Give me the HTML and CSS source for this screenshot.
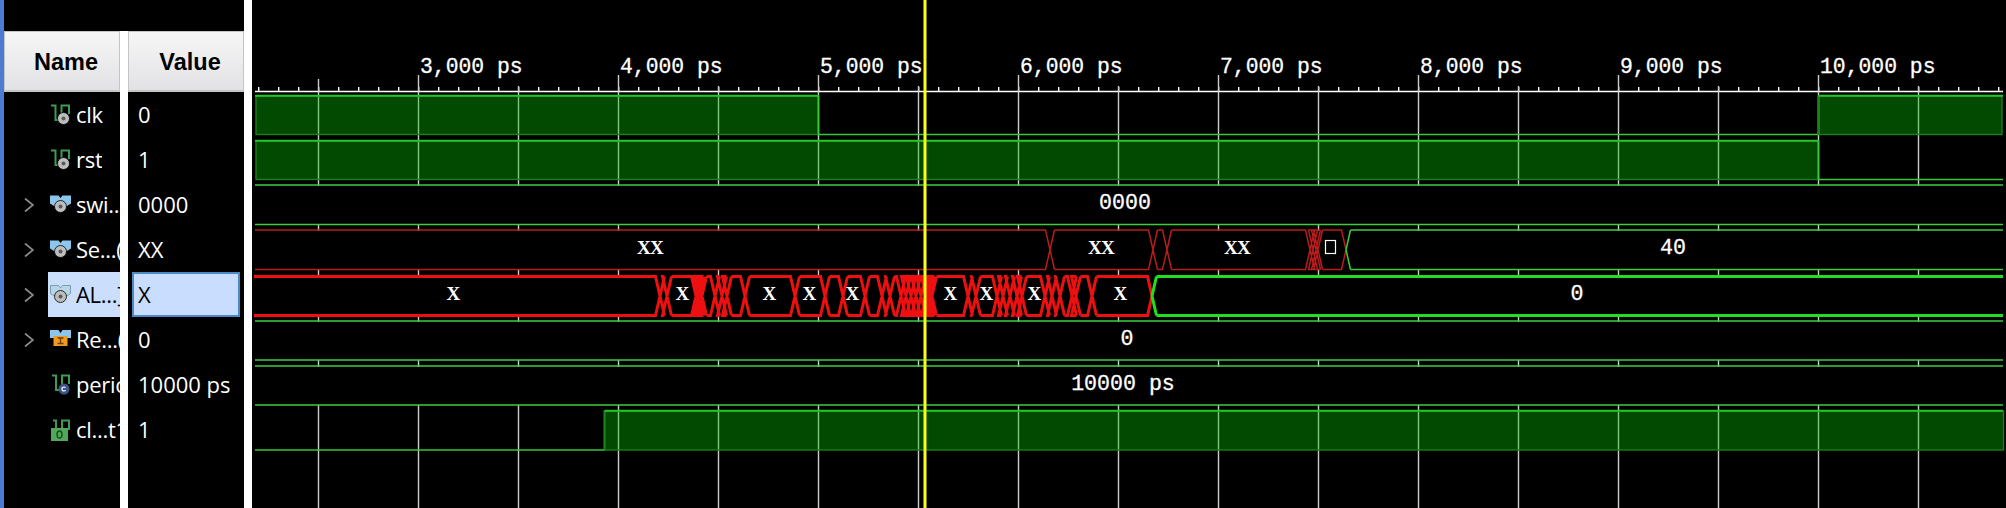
FILE: index.html
```html
<!DOCTYPE html>
<html lang="en">
<head>
    <meta charset="UTF-8">
    <title>Waveform viewer</title>
    <link rel="stylesheet" href="styles.css">
</head>
<body>
    <svg class="icon-defs" width="0" height="0">
        <symbol id="wire-in" viewBox="0 0 24 24">
            <path class="icon-wave" d="M1 2.5H5.5V17H11.5V2.5H19V11"/>
            <circle class="icon-port" cx="13.5" cy="15.5" r="6"/>
            <circle class="icon-hole" cx="13.5" cy="15.5" r="2"/>
        </symbol>
        <symbol id="wire-const" viewBox="0 0 24 24">
            <path class="icon-wave" d="M2 2.5H6V17H12V2.5H19V11"/>
            <circle class="icon-const" cx="14" cy="16" r="5.5"/>
            <path class="icon-const-c" d="M15.5 14.8A2 2 0 1 0 15.5 17.2"/>
        </symbol>
        <symbol id="wire-out" viewBox="0 0 24 24">
            <path class="icon-wave" d="M3 2.5H6V12M12 12V2.5H19V12"/>
            <rect class="icon-out" x="1" y="10" width="17" height="13"/>
            <ellipse class="icon-out-o" cx="9.5" cy="16.5" rx="2.5" ry="3.5"/>
        </symbol>
        <symbol id="bus-in" viewBox="0 0 24 24">
            <path class="icon-bus" d="M0 2.5H8.5L10.5 5L12.5 2.5H21V10.5L17 13H4L0 10.5Z"/>
            <circle class="icon-port" cx="10.5" cy="13.5" r="6"/>
            <circle class="icon-hole" cx="10.5" cy="13.5" r="2"/>
        </symbol>
        <symbol id="bus-sel" viewBox="0 0 24 24">
            <path class="icon-bus icon-bus-sel" d="M0.5 2.5H8.5L10.5 5L12.5 2.5H20.5V10.5L17 13H4L0.5 10.5Z"/>
            <circle class="icon-port" cx="10.5" cy="13.5" r="6"/>
            <circle class="icon-hole" cx="10.5" cy="13.5" r="2"/>
        </symbol>
        <symbol id="bus-reg" viewBox="0 0 24 24">
            <path class="icon-bus" d="M0 2H8.5L10.5 5L12.5 2H21V10H0Z"/>
            <rect class="icon-reg" x="3.5" y="8" width="14" height="10"/>
            <path class="icon-reg-i" d="M7.5 10H13.5M10.5 10V15.5M7.5 15.5H13.5"/>
        </symbol>
    </svg>

    <div class="strip"></div>

    <div class="column">
        <div class="column-head">Name</div>
        <div class="name-row">
            <div class="chevron-slot"></div>
            <div class="name-cell"><svg class="icon"><use href="#wire-in"/></svg><span>clk</span></div>
        </div>
        <div class="name-row">
            <div class="chevron-slot"></div>
            <div class="name-cell"><svg class="icon"><use href="#wire-in"/></svg><span>rst</span></div>
        </div>
        <div class="name-row">
            <div class="chevron-slot"><svg class="chevron" viewBox="0 0 10 14"><path d="M1 0.5L9 7L1 13.5"/></svg></div>
            <div class="name-cell"><svg class="icon"><use href="#bus-in"/></svg><span>swi...</span></div>
        </div>
        <div class="name-row">
            <div class="chevron-slot"><svg class="chevron" viewBox="0 0 10 14"><path d="M1 0.5L9 7L1 13.5"/></svg></div>
            <div class="name-cell"><svg class="icon"><use href="#bus-in"/></svg><span>Se...(</span></div>
        </div>
        <div class="name-row selected">
            <div class="chevron-slot"><svg class="chevron" viewBox="0 0 10 14"><path d="M1 0.5L9 7L1 13.5"/></svg></div>
            <div class="name-cell"><svg class="icon"><use href="#bus-sel"/></svg><span>AL...]</span></div>
        </div>
        <div class="name-row">
            <div class="chevron-slot"><svg class="chevron" viewBox="0 0 10 14"><path d="M1 0.5L9 7L1 13.5"/></svg></div>
            <div class="name-cell"><svg class="icon"><use href="#bus-reg"/></svg><span>Re...(</span></div>
        </div>
        <div class="name-row">
            <div class="chevron-slot"></div>
            <div class="name-cell"><svg class="icon"><use href="#wire-const"/></svg><span>period</span></div>
        </div>
        <div class="name-row">
            <div class="chevron-slot"></div>
            <div class="name-cell"><svg class="icon"><use href="#wire-out"/></svg><span>cl...t1</span></div>
        </div>
    </div>

    <div class="divider"></div>

    <div class="column">
        <div class="column-head">Value</div>
        <div class="value-row">0</div>
        <div class="value-row">1</div>
        <div class="value-row">0000</div>
        <div class="value-row">XX</div>
        <div class="value-row selected">X</div>
        <div class="value-row">0</div>
        <div class="value-row">10000 ps</div>
        <div class="value-row">1</div>
    </div>

    <div class="divider full"></div>

    <svg class="wave" viewBox="252 0 1754 508">
        <defs>
            <pattern id="ticks" x="258" y="87" width="20" height="5" patternUnits="userSpaceOnUse">
                <rect width="1.4" height="5" fill="#fff"/>
            </pattern>
        </defs>

        <!-- ruler -->
        <rect x="258" y="87" width="1742" height="5" fill="url(#ticks)"/>
        <path class="ruler" d="M255 91.5H2003"/>
        <text class="time" x="420" y="73">3,000 ps</text>
        <text class="time" x="620" y="73">4,000 ps</text>
        <text class="time" x="820" y="73">5,000 ps</text>
        <text class="time" x="1020" y="73">6,000 ps</text>
        <text class="time" x="1220" y="73">7,000 ps</text>
        <text class="time" x="1420" y="73">8,000 ps</text>
        <text class="time" x="1620" y="73">9,000 ps</text>
        <text class="time" x="1820" y="73">10,000 ps</text>

        <!-- grid -->
        <path class="grid" d="M318.5 79V508M418.5 75V508M518.5 86V508M618.5 75V508M718.5 86V508M818.5 75V508M918.5 86V508M1018.5 75V508M1118.5 86V508M1218.5 75V508M1318.5 86V508M1418.5 75V508M1518.5 86V508M1618.5 75V508M1718.5 86V508M1818.5 75V508M1918.5 86V508"/>

        <!-- bus rows hide the grid -->
        <rect class="row-mask" x="252" y="186" width="1754" height="38"/>
        <rect class="row-mask" x="252" y="231" width="1754" height="38"/>
        <rect class="row-mask" x="252" y="277" width="1754" height="38"/>
        <rect class="row-mask" x="252" y="322" width="1754" height="38"/>
        <rect class="row-mask" x="252" y="367" width="1754" height="38"/>

        <!-- clk -->
        <rect class="high" x="256" y="96" width="562" height="38.5"/>
        <path class="high-top" d="M255 95.7H818.5"/>
        <path class="low-line" d="M818.5 96V134.5H1818.5V96"/>
        <rect class="high" x="1818.5" y="96" width="183.5" height="38.5"/>
        <path class="high-top" d="M1818.5 95.7H2003"/>

        <!-- rst -->
        <rect class="high" x="256" y="141" width="1562" height="38.5"/>
        <path class="high-top" d="M255 140.7H1818.5"/>
        <path class="low-line" d="M1818.5 141V179.5H2003"/>

        <!-- switches -->
        <path class="thin-green" d="M255 185H2003M255 224.5H2003"/>
        <text class="bus-label" x="1125" y="209">0000</text>

        <!-- seven segment out -->
        <path id="seg-red" class="thin-red"/>
        <path id="seg-green" class="thin-green"/>
        <text class="bus-x" x="650" y="254">XX</text>
        <text class="bus-x" x="1101" y="254">XX</text>
        <text class="bus-x" x="1237" y="254">XX</text>
        <rect class="tofu" x="1325.5" y="240.5" width="10" height="13"/>
        <text class="bus-label" x="1673" y="254">40</text>

        <!-- alu result -->
        <path id="alu-red" class="thick-red"/>
        <path id="alu-green" class="thick-green"/>
        <text class="bus-x" x="453" y="300">X</text>
        <text class="bus-x" x="682" y="300">X</text>
        <text class="bus-x" x="769" y="300">X</text>
        <text class="bus-x" x="809" y="300">X</text>
        <text class="bus-x" x="852" y="300">X</text>
        <text class="bus-x" x="950" y="300">X</text>
        <text class="bus-x" x="986" y="300">X</text>
        <text class="bus-x" x="1034" y="300">X</text>
        <text class="bus-x" x="1120" y="300">X</text>
        <text class="bus-label" x="1577" y="300">0</text>

        <!-- result reg -->
        <path class="thin-green" d="M255 321H2003M255 360H2003"/>
        <text class="bus-label" x="1127" y="345">0</text>

        <!-- period -->
        <path class="thin-green" d="M255 366H2003M255 405H2003"/>
        <text class="bus-label" x="1123" y="390">10000 ps</text>

        <!-- clock out -->
        <path class="low-line" d="M255 450H604.5V411"/>
        <rect class="high" x="604.5" y="411" width="1399" height="39"/>
        <path class="high-top" d="M604.5 410.7H2003"/>

        <!-- cursor -->
        <path class="cursor" d="M925 0V508"/>
    </svg>

    <script src="wave.js"></script>
</body>
</html>
```

FILE: styles.css
```css
html, body { margin: 0; height: 100%; }
body { display: flex; height: 508px; overflow: hidden; background-color: #000; font-family: "Open Sans", "Noto Sans", sans-serif; font-size: 22px; color: #fff; }

.icon-defs { position: absolute; }
.strip { width: 4px; background-color: #4a7dd1; }
.column { width: 116px; padding-top: 31px; }
.divider { width: 8px; margin-top: 31px; background-color: #fff; }
.divider.full { margin-top: 0; }

.column-head { height: 61px; box-sizing: border-box; padding: 2px 0 0 8px; border: 1px solid #c4c4c4; border-bottom-width: 2px; display: flex; align-items: center; justify-content: center; background: linear-gradient(#f6f6f6, #e2e2e6); font-family: "Liberation Sans", Arial, sans-serif; font-size: 23.5px; font-weight: bold; color: #000; }

.name-row { height: 45px; display: flex; overflow: hidden; white-space: nowrap; }
.chevron-slot { width: 44px; flex: none; display: flex; align-items: center; padding-left: 20px; box-sizing: border-box; }
.chevron { width: 10px; height: 14px; fill: none; stroke: #8a8a8a; stroke-width: 1.8; }
.name-cell { flex: 1; min-width: 0; display: flex; align-items: center; padding-left: 2px; }
.name-cell span { min-width: 0; overflow: hidden; padding-bottom: 2px; letter-spacing: -0.3px; }
.icon { width: 24px; height: 24px; flex: none; margin-right: 2px; }
.name-row.selected .name-cell { background-color: #cbdffd; color: #000; }

.value-row { height: 45px; box-sizing: border-box; padding: 0 0 2px 10px; display: flex; align-items: center; white-space: nowrap; }
.value-row.selected { margin: 0 4px; padding-left: 4px; border: 2px solid #4a8ac6; background-color: #c9defe; color: #000; }

.icon-wave { fill: none; stroke: #3f9a52; stroke-width: 2; }
.icon-port { fill: #bdbdbd; stroke: #000; stroke-width: 0.8; }
.icon-hole { fill: #5a5a5a; }
.icon-bus { fill: #8cc6ea; }
.icon-bus-sel { fill: #b6d6ea; stroke: #7d9bab; stroke-width: 1; }
.icon-reg { fill: #f09a22; }
.icon-reg-i { fill: none; stroke: #6b4410; stroke-width: 1.4; }
.icon-const { fill: #3c5587; }
.icon-const-c { fill: none; stroke: #fff; stroke-width: 1.2; }
.icon-out { fill: #52a85a; }
.icon-out-o { fill: none; stroke: #174f1d; stroke-width: 1.4; }

.wave { width: 1754px; height: 508px; display: block; flex: none; }
.time { font-family: "Liberation Mono", monospace; font-size: 21.4px; fill: #fff; stroke: #fff; stroke-width: 0.3; }
.bus-label { font-family: "Liberation Mono", monospace; font-size: 21.6px; fill: #fff; stroke: #fff; stroke-width: 0.3; text-anchor: middle; }
.bus-x { font-family: "Liberation Serif", serif; font-size: 19px; font-weight: bold; letter-spacing: -0.7px; fill: #fff; text-anchor: middle; }
.ruler { fill: none; stroke: #fff; stroke-width: 1.4; }
.grid { fill: none; stroke: #cdcdcd; stroke-width: 1.4; }
.row-mask { fill: #000; }
.high { fill: #04c004; fill-opacity: 0.385; stroke: #1c7e1c; stroke-width: 1.4; }
.high-top { fill: none; stroke: #25c425; stroke-width: 2; }
.low-line { fill: none; stroke: #38c838; stroke-width: 1.6; }
.thin-green { fill: none; stroke: #3ecb3e; stroke-width: 1.5; }
.thin-red { fill: none; stroke: #b81c1c; stroke-width: 1.5; }
.thick-red { fill: none; stroke: #ee1010; stroke-width: 3; }
.thick-green { fill: none; stroke: #1fe01f; stroke-width: 3; }
.tofu { fill: none; stroke: #fff; stroke-width: 1.2; }
.cursor { fill: none; stroke: #ffff14; stroke-width: 3; }
```

FILE: wave.js
```js
// half width of a bus transition, px
const slant = 4.5;

// edges = places where the bus value changes. openEnd / openStart = the bus
// meets a segment of another colour there instead of a plain line.
const buses = [
    { id: "seg-red", top: 230, bottom: 269.5, from: 255, to: 1346, openEnd: true,
      edges: [1050, 1153, 1167, 1310, 1313, 1316, 1318] },
    { id: "seg-green", top: 230, bottom: 269.5, from: 1346, to: 2003, openStart: true, edges: [] },
    { id: "alu-red", top: 276.5, bottom: 315.5, from: 254, to: 1152, openEnd: true,
      edges: [660, 667, 696, 699, 702, 715, 722, 727, 745, 795, 825, 843, 865, 882, 890,
              901, 906, 911, 916, 921, 926, 928, 930, 932,
              968, 976, 997, 1003, 1010, 1017, 1022, 1045, 1052, 1060, 1072, 1076, 1092] },
    { id: "alu-green", top: 276.5, bottom: 315.5, from: 1152, to: 2003, openStart: true, edges: [] }
];

function busPath(bus) {
    const mid = (bus.top + bus.bottom) / 2;
    let d = "";
    let left = bus.openStart ? bus.from + slant : bus.from;

    if (bus.openStart) {
        d += `M${bus.from} ${mid}L${left} ${bus.top}M${bus.from} ${mid}L${left} ${bus.bottom}`;
    }

    for (const x of bus.edges) {
        d += `M${left} ${bus.top}L${x - slant} ${bus.top}L${x + slant} ${bus.bottom}`;
        d += `M${left} ${bus.bottom}L${x - slant} ${bus.bottom}L${x + slant} ${bus.top}`;
        left = x + slant;
    }

    if (bus.openEnd) {
        const end = bus.to - slant;
        d += `M${left} ${bus.top}L${end} ${bus.top}L${bus.to} ${mid}`;
        d += `M${left} ${bus.bottom}L${end} ${bus.bottom}L${bus.to} ${mid}`;
    } else {
        d += `M${left} ${bus.top}L${bus.to} ${bus.top}M${left} ${bus.bottom}L${bus.to} ${bus.bottom}`;
    }
    return d;
}

for (const bus of buses) {
    document.getElementById(bus.id).setAttribute("d", busPath(bus));
}
```
